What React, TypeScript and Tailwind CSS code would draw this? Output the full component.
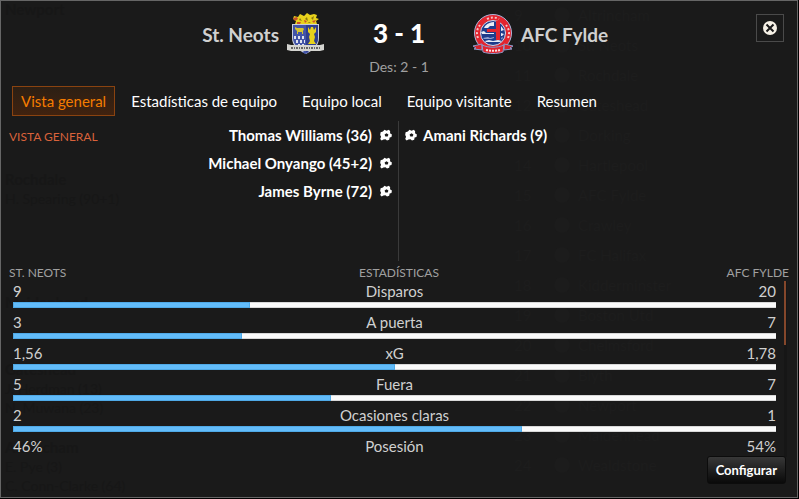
import clsx from 'clsx';

const tabs = ['Vista general', 'Estadísticas de equipo', 'Equipo local', 'Equipo visitante', 'Resumen'];

const homeGoals = ['Thomas Williams (36)', 'Michael Onyango (45+2)', 'James Byrne (72)'];
const awayGoals = ['Amani Richards (9)'];

const stats = [
  { label: 'Disparos', home: '9', away: '20', share: 31 },
  { label: 'A puerta', home: '3', away: '7', share: 30 },
  { label: 'xG', home: '1,56', away: '1,78', share: 50 },
  { label: 'Fuera', home: '5', away: '7', share: 41.7 },
  { label: 'Ocasiones claras', home: '2', away: '1', share: 66.7 },
  { label: 'Posesión', home: '46%', away: '54%', share: null },
];

const table = [
  'Altrincham',
  'St. Neots',
  'Rochdale',
  'Gateshead',
  'Dorking',
  'Hartlepool',
  'AFC Fylde',
  'Crawley',
  'FC Halifax',
  'Kidderminster',
  'Boston Utd',
  'Chelmsford',
  'Blyth',
  'Newport',
  'Maidenhead',
  'Wealdstone',
];

const results = [
  { team: 'Newport', scorers: [], top: 'top-[-2px]' },
  { team: 'Rochdale', scorers: ['H. Spearing (90+1)'], top: 'top-[168px]' },
  { team: 'Maidenhead', scorers: [], top: 'top-[291px]' },
  { team: 'Gateshead', scorers: ['J. Herdman (13)', 'N. Muwana (23)'], top: 'top-[358px]' },
  { team: 'Altrincham', scorers: ['E. Pye (3)', 'C. Conn-Clarke (64)'], top: 'top-[436px]' },
];

function BallIcon() {
  return (
    <svg viewBox="0 0 12 12" className="size-3 shrink-0" aria-hidden="true">
      <path
        fill="#fff"
        d="M4.500.8 6.500 1.800 9 .8l1.200 1.700-.2 1.700 1.900 1.400-.4 2.400-1.900.6-.4 2.100-2.200.9-1.500-1.400-2.100.2-1.700 1-1.500-1.500.9-2.100-.9-1.700.4-2.800 2.300-.7z"
      />
      <path fill="#1a1a1a" d="m6.500 4.200 1.900 1.300-.7 2.100H5.300l-.7-2.100z" />
    </svg>
  );
}

function StNeotsCrest() {
  return (
    <svg viewBox="0 0 38 42" className="h-[42px] w-[38px]" aria-hidden="true">
      <path fill="#e8d21c" d="M8 11 9 8 6 6l1-3 4 1 2-3 4 2 3-3 3 2 4-1 3 1-1 3 3 1-3 2 1 3z" />
      <path fill="#c8502a" d="M6 5l4-1 1 2-3 2zM10 9h4l-1 2h-3zM17 7l3 1-2 2zM25 8l4-1-2 3z" />
      <path fill="#8c7a10" d="M13 5l2 3-3-1zM20 4l1 4-3-2zM27 3l-1 4-2-2zM22 9l2 1h-3z" />
      <path fill="#c9cdd8" d="M5 11h27v14c0 8-6 12-13 16C11 37 5 33 5 25z" />
      <path fill="#4355a8" d="M6 12h25v13c0 7-6 11-12 15C12 36 6 32 6 25z" />
      <path fill="#2f3e8e" d="M19 12h12v13c0 7-6 11-12 15z" />
      <path fill="#d6c52e" d="M8 14l2 1h6l1 1-1 2v3h-1v-2h-4v2h-1v-3l-2-2z" />
      <path
        fill="#dfe3ee"
        d="M7 23h2v3H7zM11 23h2v3h-2zM15 23h2v3h-2zM9 27h2v3H9zM13 27h2v3h-2zM17 27h1v3h-1zM11 31h2v2h-2zM15 31h2v2h-2z"
      />
      <path fill="#e8d21c" d="M21 14l2 3 1-3h2l1 3 2-3v5l-2 2 1 3-1 4 2 3h-8l2-3-1-4 1-3-2-2z" />
      <path fill="#d4d4d0" d="M0 31l4 1h29l4-1v6l-4 1H4l-4-1z" />
      <path stroke="#666" strokeWidth="2" strokeDasharray="2 1 1 1" d="M4 35h29" />
      <path fill="#4355a8" d="M15 39h7l-3.500 2z" />
    </svg>
  );
}

function FyldeCrest() {
  return (
    <svg viewBox="0 0 40 40" className="size-10" aria-hidden="true">
      <circle cx="20" cy="19" r="18.500" fill="#e3242e" stroke="#aeb7dc" />
      <circle cx="20" cy="19" r="12.500" fill="#1f3c8c" stroke="#d5d9ea" />
      <path fill="#e9ecf5" d="M12 12c3-3 6-4 9-4v4h-4l-2 2h-4zM8 18l3-1 2 2h8v1H9zM28 12l3 4-3 1zM28 19l3 1-2 2h-1z" />
      <path fill="#8fa0d2" d="M10 24l5-1 2 1 4-1v1l-3 1h-7zM28 24l2-1-1 3z" />
      <path fill="#e9ecf5" d="M12 27l4-1 4 1 5-1 4 1-2 1H13z" />
      <path fill="#e3242e" d="M23 7h4v19h-4v-8h-9v-3h9z" />
      <path
        stroke="#f4c3c6"
        strokeWidth="2"
        strokeDasharray="2 2"
        fill="none"
        d="M14 5c4-2 8-2 12 0M5 24c-2-5-1-9 2-13M35 24c2-5 1-9-2-13"
      />
      <path fill="#d8222c" stroke="#8f9bcb" d="M0 32l9-2v6l-8-1 2-1zM40 32l-9-2v6l8-1-2-1z" />
      <path fill="#e3242e" stroke="#8f9bcb" d="M9 31c7 3 15 3 22 0l-1 7c-6 2-14 2-20 0z" />
      <path stroke="#fbe3e4" strokeWidth="2" strokeDasharray="2 1" fill="none" d="M13 36c5 1 10 1 14 0" />
    </svg>
  );
}

// league screen showing faintly through the panel
function Backdrop() {
  return (
    <div aria-hidden="true" className="absolute inset-0 overflow-hidden text-[#1d1d1d]">
      <ol className="absolute -top-px left-[513px]">
        {table.map((team, i) => (
          <li key={team} className="flex h-[30px] items-center">
            <span className="w-10">{i + 9}</span>
            <span className="mr-2 size-4 rounded-full bg-[#1c1c1c]" />
            {team}
          </li>
        ))}
      </ol>
      {results.map(({ team, scorers, top }) => (
        <div key={team} className={clsx('absolute left-1 text-[#171717]', top)}>
          <p className="font-bold">{team}</p>
          {scorers.map((scorer) => (
            <p key={scorer} className="text-sm leading-[19px]">{scorer}</p>
          ))}
        </div>
      ))}
    </div>
  );
}

export default function App() {
  return (
    <div className="flex min-h-screen bg-black pr-px pb-px font-['Lato','Noto_Sans',sans-serif] text-[15px] leading-5 text-white">
      <div className="relative flex flex-1 flex-col border border-[#666] bg-[#1a1a1a] pb-3">
        <Backdrop />
        <header className="relative grid grid-cols-[1fr_148px_1fr] pt-3">
          <div className="flex h-[42px] items-center justify-end gap-2 text-[19px] font-bold text-[#d0d0d0]">
            <span className="pt-0.5">St. Neots</span>
            <StNeotsCrest />
          </div>
          <div className="text-center">
            <p className="pt-1 text-[26px] leading-8 font-black">3 - 1</p>
            <p className="pt-2 text-sm leading-5 text-[#a0a0a0]">Des: 2 - 1</p>
          </div>
          <div className="flex h-[42px] items-center gap-2 text-[19px] font-bold text-[#d0d0d0]">
            <FyldeCrest />
            <span className="pt-0.5">AFC Fylde</span>
          </div>
        </header>
        <button
          aria-label="Cerrar"
          className="absolute top-[13px] right-[13px] grid size-7 place-items-center border border-[#4a4a4a]"
        >
          <svg viewBox="0 0 14 14" className="size-3.5">
            <circle cx="7" cy="7" r="7" fill="#f6f1e6" />
            <path stroke="#1a1a1a" strokeWidth="2" d="m3.500 3.500 7 7m0-7-7 7" />
          </svg>
        </button>

        <nav className="relative mt-[9px] flex gap-[7px] px-[11px]">
          {tabs.map((tab, i) => (
            <button
              key={tab}
              className={clsx(
                'h-[30px] border px-2',
                i === 0
                  ? 'border-[#8a4310] bg-linear-to-b from-[#2c1f14] to-[#40220f] text-[#f57c00]'
                  : 'border-transparent',
              )}
            >
              {tab}
            </button>
          ))}
        </nav>

        <section className="relative mt-[5px] grid h-[140px] grid-cols-2 font-bold">
          <div className="flex justify-between border-r border-[#3a3a3a] pr-1.5 pl-2">
            <h2 className="pt-2 text-xs leading-4 font-normal text-[#d9623b]">VISTA GENERAL</h2>
            <ul className="flex flex-col gap-2 pt-1">
              {homeGoals.map((goal) => (
                <li key={goal} className="flex items-center justify-end gap-2">
                  {goal}
                  <BallIcon />
                </li>
              ))}
            </ul>
          </div>
          <ul className="flex flex-col gap-2 pt-1 pl-1.5">
            {awayGoals.map((goal) => (
              <li key={goal} className="flex items-center gap-1.5">
                <BallIcon />
                {goal}
              </li>
            ))}
          </ul>
        </section>

        <section className="relative">
          <div className="grid grid-cols-3 px-2 pt-1 text-xs leading-4 text-[#a0a0a0]">
            <span>ST. NEOTS</span>
            <span className="text-center">ESTADÍSTICAS</span>
            <span className="text-right">AFC FYLDE</span>
          </div>
          <div className="flex pr-2.5 pl-3 text-[#d0d0d0]">
            <ul className="flex-1">
              {stats.map((stat) => (
                <li key={stat.label} className="h-[31px]">
                  <div className="grid h-[21px] grid-cols-3">
                    <span>{stat.home}</span>
                    <span className="text-center">{stat.label}</span>
                    <span className="text-right">{stat.away}</span>
                  </div>
                  {stat.share !== null && (
                    <div className="h-1.5 border-y border-[#d8d8d8] bg-[#fafafa]">
                      <div
                        className="-mt-px h-1.5 border border-[#4fa9e6] bg-[#62bcfa]"
                        style={{ width: `${stat.share}%` }}
                      />
                    </div>
                  )}
                </li>
              ))}
            </ul>
            <div className="ml-2 h-[176px] w-[3px] bg-[#161616]">
              <div className="h-16 w-0.5 bg-[#85472b]" />
            </div>
          </div>
        </section>

        <button className="absolute right-[11px] bottom-[13px] h-7 rounded-[3px] border border-[#0c0c0c] bg-linear-to-b from-[#383838] to-[#0a0a0a] px-2 text-[13px] font-bold">
          Configurar
        </button>
      </div>
    </div>
  );
}
